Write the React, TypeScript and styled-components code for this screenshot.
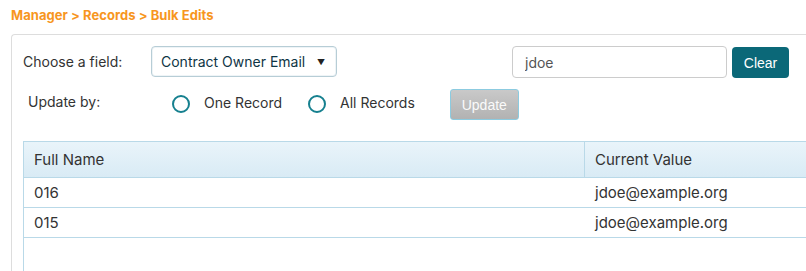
import styled, { createGlobalStyle } from "styled-components";

const Orange = "#f7961e";
const Teal = "#0b6878";
const RadioTeal = "#16808f";
const Text = "#333333";
const PanelBorder = "#dddddd";
const TableBorder = "#b9d9e8";

const GlobalStyle = createGlobalStyle`
  html, body {
    margin: 0;
    padding: 0;
    background: #ffffff;
    overflow: hidden;
  }
  body {
    font-family: Inter, "Noto Sans", sans-serif;
    color: ${Text};
  }
`;

const Page = styled.div`
  width: 806px;
  height: 271px;
  overflow: hidden;
  padding-left: 11px;
  box-sizing: border-box;
`;

const Breadcrumb = styled.div`
  height: 34px;
  padding-top: 7px;
  box-sizing: border-box;
  font: 700 13px/16px Inter, sans-serif;
  letter-spacing: 0.05px;
  color: ${Orange};
  white-space: nowrap;
`;

const Panel = styled.div`
  width: 1000px;
  height: 300px;
  border-top: 1px solid ${PanelBorder};
  border-left: 1px solid ${PanelBorder};
  border-top-left-radius: 4px;
  padding: 11px 0 0 11px;
  box-sizing: border-box;
`;

const Row = styled.div<{ $top?: number }>`
  display: flex;
  align-items: flex-start;
  margin-top: ${(p) => p.$top ?? 0}px;
`;

const Label = styled.div<{ $width: number; $indent?: number; $lineHeight: number }>`
  width: ${(p) => p.$width}px;
  padding-left: ${(p) => p.$indent ?? 0}px;
  box-sizing: border-box;
  font: 400 14px/${(p) => p.$lineHeight}px Inter, sans-serif;
  color: ${Text};
  white-space: nowrap;
`;

const Select = styled.div`
  width: 186px;
  height: 31px;
  border: 1px solid #b7cdd6;
  border-radius: 4px;
  box-sizing: border-box;
  display: flex;
  align-items: center;
  padding: 0 11px 0 9px;
  font: 400 14px Inter, sans-serif;
  color: #0e3545;
  justify-content: space-between;
  box-shadow: inset 0 0 0 1px #eef4f7;

  .arrow {
    font-size: 8px;
    color: #222;
  }
`;

const SearchInput = styled.input`
  width: 215px;
  height: 32px;
  margin-left: 175px;
  border: 1px solid #cccccc;
  border-radius: 4px;
  box-sizing: border-box;
  padding: 0 12px;
  font: 400 14px Inter, sans-serif;
  color: #555;
  outline: none;
`;

const ClearButton = styled.button`
  width: 57px;
  height: 31px;
  margin-left: 5px;
  margin-top: 1px;
  border: none;
  border-radius: 4px;
  background: ${Teal};
  color: #ffffff;
  font: 400 14px "Liberation Sans", Arial, sans-serif;
  padding: 0;
`;

const RadioOption = styled.label<{ $gapRight: number }>`
  display: flex;
  align-items: center;
  height: 26px;
  margin-right: ${(p) => p.$gapRight}px;
  font: 400 14px Inter, sans-serif;
  color: ${Text};
  white-space: nowrap;
`;

const RadioCircle = styled.span`
  width: 18px;
  height: 18px;
  border: 2.5px solid ${RadioTeal};
  border-radius: 50%;
  box-sizing: border-box;
  margin-right: 14px;
  margin-top: 3px;
`;

const UpdateButton = styled.button`
  width: 69px;
  height: 31px;
  margin-left: 35px;
  border: 1px solid #8ccbe0;
  border-radius: 3px;
  background: linear-gradient(#c9c9c9, #b2b2b2);
  color: #fafafa;
  font: 400 14px "Liberation Sans", Arial, sans-serif;
  padding: 0;

  &:disabled {
    color: #fafafa;
  }
`;

const Table = styled.div`
  margin-top: 21px;
  border-left: 1px solid ${TableBorder};
  border-top: 1px solid ${TableBorder};
  height: 200px;
`;

const TableRow = styled.div<{ $header?: boolean }>`
  display: grid;
  grid-template-columns: 561px 1fr;
  height: ${(p) => (p.$header ? 35 : 29)}px;
  border-bottom: 1px solid ${TableBorder};
  background: ${(p) =>
    p.$header ? "linear-gradient(#e9f4fa, #d9ebf5)" : "#ffffff"};
`;

const Cell = styled.div<{ $divider?: boolean }>`
  display: flex;
  align-items: center;
  padding-left: 10px;
  font: 400 15px Inter, sans-serif;
  color: ${Text};
  border-right: ${(p) => (p.$divider ? `1px solid ${TableBorder}` : "none")};
  white-space: nowrap;
`;

const rows = [
  { name: "016", value: "jdoe@example.org" },
  { name: "015", value: "jdoe@example.org" },
];

export default function App() {
  return (
    <>
      <GlobalStyle />
      <Page>
        <Breadcrumb>Manager &gt; Records &gt; Bulk Edits</Breadcrumb>
        <Panel>
          <Row>
            <Label $width={128} $lineHeight={32}>
              Choose a field:
            </Label>
            <Select>
              <span>Contract Owner Email</span>
              <span className="arrow">▼</span>
            </Select>
            <SearchInput defaultValue="jdoe" />
            <ClearButton>Clear</ClearButton>
          </Row>
          <Row $top={11}>
            <Label $width={149} $indent={5} $lineHeight={26}>
              Update by:
            </Label>
            <RadioOption $gapRight={26}>
              <RadioCircle />
              One Record
            </RadioOption>
            <RadioOption $gapRight={0}>
              <RadioCircle />
              All Records
            </RadioOption>
            <UpdateButton disabled>Update</UpdateButton>
          </Row>
          <Table>
            <TableRow $header>
              <Cell $divider>Full Name</Cell>
              <Cell>Current Value</Cell>
            </TableRow>
            {rows.map((r) => (
              <TableRow key={r.name}>
                <Cell>{r.name}</Cell>
                <Cell>{r.value}</Cell>
              </TableRow>
            ))}
          </Table>
        </Panel>
      </Page>
    </>
  );
}
